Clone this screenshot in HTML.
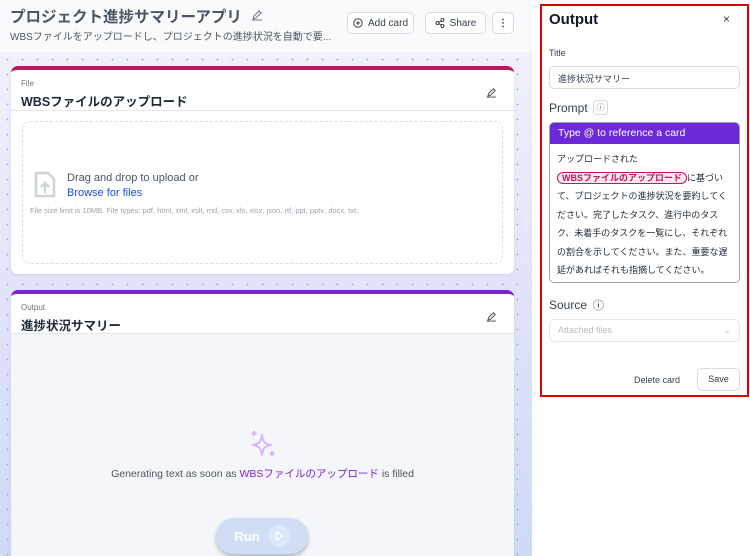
<!DOCTYPE html>
<html><head><meta charset="utf-8"><style>
*{box-sizing:border-box;margin:0;padding:0}
html,body{width:750px;height:556px;overflow:hidden}
body{background:#fff;font-family:"Liberation Sans","Noto Sans CJK JP",sans-serif;position:relative;color:#1f2937}
.abs{position:absolute}
.canvas{left:0;top:52px;width:532px;height:504px;background-image:radial-gradient(#aab1d2 0.8px,transparent 1px),linear-gradient(180deg,#f0f1fb,#e0e3fa 50%,#cfdaf5);background-size:15px 15px,100% 100%}
.hdr{left:0;top:0;width:532px;height:52px;background:#fafafc}
.btn{border:1px solid #d8dbe2;border-radius:5px;background:#fff;font-size:10px;color:#374151;display:flex;align-items:center;justify-content:center;gap:5px;height:22px;top:12px}
.card{background:#fff;border-radius:7px;overflow:hidden;box-shadow:0 1px 3px rgba(0,0,0,.08)}
.lbl{font-size:8px;color:#6b7280}
.ttl{font-size:12.5px;font-weight:bold;color:#1f2937}
</style></head><body>
<div class="abs hdr"></div>
<div class="abs" style="left:10px;top:5px;font-size:15.5px;font-weight:bold;color:#4b5563">プロジェクト進捗サマリーアプリ</div>
<svg class="abs" style="left:251px;top:9px" width="12" height="12" viewBox="0 0 12 12"><path d="M2 10l1-3 5-5 2 2-5 5z M1 11h10" fill="none" stroke="#6b7280" stroke-width="1"/></svg>
<div class="abs" style="left:10px;top:28px;font-size:10px;color:#4b5563">WBSファイルをアップロードし、プロジェクトの進捗状況を自動で要...</div>
<div class="abs btn" style="left:347px;width:67px"><svg width="10" height="10" viewBox="0 0 10 10"><circle cx="5" cy="5" r="4.2" fill="none" stroke="#374151"/><path d="M5 3v4M3 5h4" stroke="#374151"/></svg>Add card</div>
<div class="abs btn" style="left:425px;width:61px"><svg width="10" height="10" viewBox="0 0 10 10"><circle cx="2.5" cy="5" r="1.5" fill="none" stroke="#374151"/><circle cx="7.5" cy="2" r="1.5" fill="none" stroke="#374151"/><circle cx="7.5" cy="8" r="1.5" fill="none" stroke="#374151"/><path d="M4 4.3l2.2-1.4M4 5.7l2.2 1.4" stroke="#374151"/></svg>Share</div>
<div class="abs btn" style="left:492px;width:22px;font-weight:bold">⋮</div>
<div class="abs canvas"></div>

<div class="abs card" style="left:11px;top:66px;width:503px;height:208px;border-top:4px solid #be185d">
 <div class="abs lbl" style="left:10px;top:9px">File</div>
 <div class="abs ttl" style="left:10px;top:21px">WBSファイルのアップロード</div>
 <svg class="abs" style="left:475px;top:17px" width="11" height="11" viewBox="0 0 12 12"><path d="M2 10l1-3 5-5 2 2-5 5z M1 11h10" fill="none" stroke="#374151"/></svg>
 <div class="abs" style="left:0;top:40px;width:503px;height:1px;background:#e5e7eb"></div>
 <div class="abs" style="left:11px;top:51px;width:481px;height:143px;border:1.5px dashed #dcdfe5;border-radius:8px"></div>
 <svg class="abs" style="left:22px;top:101px" width="24" height="28" viewBox="0 0 24 28"><path d="M3 2h12l6 6v17H3z" fill="none" stroke="#cfd3da" stroke-width="2.5" stroke-linejoin="round"/><path d="M12 22v-9M8 16l4-4 4 4" fill="none" stroke="#cfd3da" stroke-width="2.5"/></svg>
 <div class="abs" style="left:56px;top:102px;font-size:11px;color:#4b5563">Drag and drop to upload or</div>
 <div class="abs" style="left:56px;top:117px;font-size:11px;color:#1d4ed8">Browse for files</div>
 <div class="abs" style="left:19px;top:136px;font-size:7.5px;color:#9ca3af">File size limit is 10MB. File types: pdf, html, xml, xslt, md, csv, xls, xlsx, json, rtf, ppt, pptx, docx, txt.</div>
</div>

<div class="abs card" style="left:11px;top:290px;width:503px;height:266px;border-top:4px solid #7e22ce;background:#f5f6fa;border-radius:7px 7px 0 0">
 <div class="abs" style="left:0;top:0;width:503px;height:40px;background:#fff;border-bottom:1px solid #e5e7eb"></div>
 <div class="abs lbl" style="left:10px;top:9px">Output</div>
 <div class="abs ttl" style="left:10px;top:21px">進捗状況サマリー</div>
 <svg class="abs" style="left:475px;top:17px" width="11" height="11" viewBox="0 0 12 12"><path d="M2 10l1-3 5-5 2 2-5 5z M1 11h10" fill="none" stroke="#374151"/></svg>
 <svg class="abs" style="left:238px;top:136px" width="28" height="28" viewBox="0 0 28 28"><path d="M13 5 C14 12 16 14 22 15 C16 16 14 18 13 25 C12 18 10 16 4 15 C10 14 12 12 13 5Z" fill="none" stroke="#d8b4fe" stroke-width="2" stroke-linejoin="round"/><path d="M5 1v5M2.5 3.5h5M23 21v5M20.5 23.5h5" stroke="#d8b4fe" stroke-width="2"/></svg>
 <div class="abs" style="left:0;width:503px;top:172px;text-align:center;font-size:10.5px;color:#4b5563">Generating text as soon as <span style="color:#7e22ce">WBSファイルのアップロード</span> is filled</div>
 <div class="abs" style="left:205px;top:224px;width:92px;height:36px;border-radius:18px;background:#d0def5;box-shadow:0 3px 5px rgba(0,0,0,.25);color:#fff;font-size:13px;font-weight:bold;display:flex;align-items:center;justify-content:center;gap:8px">Run<span style="width:22px;height:22px;border-radius:50%;background:#dce7f8;display:flex;align-items:center;justify-content:center"><svg width="10" height="10" viewBox="0 0 10 10"><path d="M2.5 1l6 4-6 4z" fill="none" stroke="#fff" stroke-width="1.2"/></svg></span></div>
</div>

<div class="abs" style="left:540px;top:4px;width:209px;height:393px;border:2px solid #e00000;background:#fff">
 <div class="abs" style="left:7px;top:5px;font-size:15px;font-weight:bold;color:#111827">Output</div>
 <div class="abs" style="left:181px;top:6px;font-size:12px;color:#374151">×</div>
 <div class="abs" style="left:7px;top:42px;font-size:9px;color:#374151">Title</div>
 <div class="abs" style="left:7px;top:60px;width:191px;height:23px;border:1px solid #d8dbe2;border-radius:5px;font-size:9px;color:#374151;padding:5px 8px">進捗状況サマリー</div>
 <div class="abs" style="left:7px;top:95px;font-size:12px;color:#374151">Prompt</div>
 <div class="abs" style="left:51px;top:94px;width:15px;height:15px;border:1px solid #d8dbe2;border-radius:3px;font-size:8px;text-align:center;line-height:13px;color:#6b7280">ⓘ</div>
 <div class="abs" style="left:7px;top:116px;width:191px;height:161px;border:1px solid #9ca3af;border-radius:5px;overflow:hidden">
  <div style="background:#6d28d9;color:#fff;font-size:10.5px;padding:4px 8px;height:21px">Type @ to reference a card</div>
  <div style="font-size:9px;line-height:18.5px;color:#1f2937;padding:6px 7px">アップロードされた<br><span style="background:#fce7f3;border:1px solid #be185d;border-radius:8px;color:#be185d;font-weight:bold;padding:0 4px">WBSファイルのアップロード</span>に基づいて、プロジェクトの進捗状況を要約してください。完了したタスク、進行中のタスク、未着手のタスクを一覧にし、それぞれの割合を示してください。また、重要な遅延があればそれも指摘してください。</div>
 </div>
 <div class="abs" style="left:7px;top:292px;font-size:12px;color:#374151">Source</div>
 <div class="abs" style="left:51px;top:291px;font-size:11px;color:#374151">ⓘ</div>
 <div class="abs" style="left:7px;top:313px;width:191px;height:23px;border:1px solid #e5e7eb;border-radius:5px;font-size:9px;color:#b8bcc4;padding:5px 8px">Attached files<span style="float:right">⌄</span></div>
 <div class="abs" style="left:92px;top:369px;font-size:9px;color:#374151">Delete card</div>
 <div class="abs" style="left:155px;top:362px;width:43px;height:23px;border:1px solid #d8dbe2;border-radius:5px;font-size:9px;color:#374151;text-align:center;line-height:21px">Save</div>
</div>
</body></html>
